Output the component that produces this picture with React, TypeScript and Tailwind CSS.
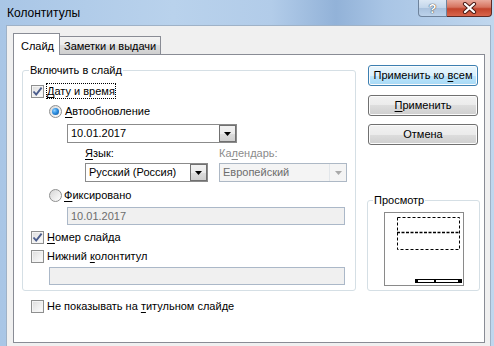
import React from "react";

const Check = () => (
  <svg width="11" height="11" viewBox="0 0 11 11" className="block">
    <path d="M1.5 5.5 L4.2 8.6 L9.6 1.6" fill="none" stroke="#4b5d8d" strokeWidth="1.9" />
  </svg>
);

const Checkbox = ({ checked }: { checked?: boolean }) => (
  <div className="flex h-[13px] w-[13px] shrink-0 items-center justify-center border border-[#8e8f8f] bg-[linear-gradient(135deg,#dcdcdc,#ffffff)] shadow-[inset_0_0_0_1px_#f4f4f4]">
    {checked && <Check />}
  </div>
);

const Radio = ({ checked }: { checked?: boolean }) => (
  <div className="flex h-[13px] w-[13px] shrink-0 items-center justify-center rounded-full border border-[#8e8f8f] bg-[linear-gradient(135deg,#d6d6d6,#ffffff)]">
    {checked && (
      <div className="h-[7px] w-[7px] rounded-full bg-[radial-gradient(circle_at_35%_35%,#8fd0ff_0%,#2c8ee0_45%,#0d4f94_100%)]" />
    )}
  </div>
);

const Arrow = ({ color }: { color: string }) => (
  <svg width="7" height="4" viewBox="0 0 7 4" className="block">
    <polygon points="0,0 7,0 3.5,4" fill={color} />
  </svg>
);

const Combo = ({
  value,
  className,
  disabled,
}: {
  value: string;
  className: string;
  disabled?: boolean;
}) => (
  <div
    className={`flex h-[19px] items-center border ${className} ${
      disabled
        ? "border-[#adb8c5] bg-[#f4f4f4] text-[#6d6d6d]"
        : "border-[#8b8b8b] bg-white"
    }`}
  >
    <div className="flex-1 whitespace-nowrap pl-[3px] leading-[17px]">{value}</div>
    {disabled ? (
      <div className="flex h-[17px] w-[17px] items-center justify-center border-l border-[#e2e6ea]">
        <Arrow color="#a9a9a9" />
      </div>
    ) : (
      <div className="flex h-[17px] w-[17px] items-center justify-center border border-[#707070] bg-[linear-gradient(#f2f2f2_0%,#ebebeb_50%,#dddddd_50%,#cfcfcf_100%)]">
        <Arrow color="#000" />
      </div>
    )}
  </div>
);

const DisabledInput = ({ value, className }: { value?: string; className: string }) => (
  <div
    className={`flex h-[18px] items-center border border-[#abb8c8] bg-[#f0f0f0] pl-[3px] text-[#6d6d6d] ${className}`}
  >
    {value}
  </div>
);

const CheckRow = ({
  checked,
  focused,
  children,
  className,
}: {
  checked?: boolean;
  focused?: boolean;
  children: React.ReactNode;
  className: string;
}) => (
  <div className={`flex h-[16px] items-center gap-[2px] ${className}`}>
    <Checkbox checked={checked} />
    <span
      className={`whitespace-nowrap border leading-[14px] ${
        focused ? "border-dotted border-black" : "border-transparent"
      }`}
    >
      {children}
    </span>
  </div>
);

const Key = ({ children }: { children: React.ReactNode }) => (
  <span className="underline underline-offset-[2px]">{children}</span>
);

const Button = ({
  children,
  primary,
  className,
}: {
  children: React.ReactNode;
  primary?: boolean;
  className: string;
}) => (
  <div
    className={`flex h-[21px] w-[110px] items-center justify-center rounded-[3px] border ${className} ${
      primary
        ? "border-[#3c7fb1] bg-[linear-gradient(#eaf6fd_0%,#d9f0fc_50%,#bee6fd_50%,#a7d9f5_100%)]"
        : "border-[#707070] bg-[linear-gradient(#f2f2f2_0%,#ebebeb_50%,#dddddd_50%,#cfcfcf_100%)]"
    } shadow-[inset_0_0_0_1px_#fbfbfb]`}
  >
    <span className="whitespace-nowrap">{children}</span>
  </div>
);

const PreviewPage = () => (
  <svg width="80" height="74" viewBox="0 0 80 74" className="block">
    <rect x="0.5" y="0.5" width="79" height="73" fill="#fff" stroke="#8a8a8a" />
    <rect x="13.5" y="5.5" width="62" height="32" fill="none" stroke="#000" strokeDasharray="3 2" />
    <line x1="13" y1="20.5" x2="76" y2="20.5" stroke="#000" strokeWidth="1.4" strokeDasharray="3 1.5" />
    <rect x="31" y="67" width="47" height="4" fill="#000" />
    <rect x="34" y="68" width="16" height="2" fill="#fff" />
    <rect x="52" y="68" width="22" height="2" fill="#fff" />
  </svg>
);

export default function App() {
  return (
    <div className="flex h-[346px] w-[494px] flex-col overflow-hidden bg-[linear-gradient(90deg,#a9c6e6_0%,#b9d2ec_35%,#b2cce9_55%,#92b2d8_68%,#a9c5e5_78%,#c0d7ee_100%)] text-[11px] text-black [font-family:'Liberation_Sans',Arial,sans-serif]">
      {/* title bar */}
      <div className="flex h-[25px] shrink-0">
        <div className="flex-1 pl-[7px] pt-[6px] text-[12px] leading-[14px]">Колонтитулы</div>
        <div className="mr-[2px] flex h-[17px]">
          <div className="flex w-[29px] items-center justify-center rounded-bl-[4px] border border-t-0 border-[#6e839c] bg-[linear-gradient(#dbe7f4_0%,#c2d5ea_50%,#a9c1dd_50%,#bcd2ea_100%)] text-[13px] font-bold leading-none text-white [text-shadow:0_0_1px_#333,0_0_1px_#333]">
            ?
          </div>
          <div className="flex w-[45px] items-center justify-center rounded-br-[4px] border border-l-0 border-t-0 border-[#5f2a25] bg-[linear-gradient(#e9a99c_0%,#d6735f_45%,#c2442c_55%,#d8654c_100%)]">
            <svg width="15" height="12" viewBox="0 0 15 12" className="block">
              <path d="M3 2 L12 10 M12 2 L3 10" stroke="#4a1a14" strokeWidth="4.2" strokeLinecap="round" />
              <path d="M3 2 L12 10 M12 2 L3 10" stroke="#fff" strokeWidth="2.3" strokeLinecap="round" />
            </svg>
          </div>
        </div>
      </div>

      {/* client area */}
      <div className="ml-[6px] mr-[3px] flex-1 border-l border-r border-t border-[#9fb2c7] bg-[#f0f0f0]">
        <div className="flex items-end pl-[6px] pt-[7px]">
          <div className="relative z-10 -mb-px flex h-[22px] w-[47px] border border-b-0 border-[#898c95] bg-white pl-[7px] pt-[5px] leading-[14px]">
            Слайд
          </div>
          <div className="flex h-[18px] w-[101px] items-center whitespace-nowrap border border-b-0 border-l-0 border-[#898c95] bg-[linear-gradient(#f3f3f3_0%,#ebebeb_50%,#dddddd_50%,#cfcfcf_100%)] pl-[4px] leading-[14px]">
            Заметки и выдачи
          </div>
        </div>

        <div className="ml-[6px] flex h-[289px] w-[472px] border border-[#898c95] bg-white">
          {/* left column */}
          <div className="flex flex-col pl-[8px]">
            <fieldset className="mt-[8px] flex w-[332px] flex-col rounded-[3px] border border-[#d5dfe5] pb-[5px] pl-[8px] pr-[8px]">
              <legend className="-ml-[2px] px-[1px] leading-[14px]">Включить в слайд</legend>

              <CheckRow checked focused className="mt-[6px]">
                <Key>Д</Key>ату и время
              </CheckRow>

              <div className="ml-[18px] mt-[4px] flex h-[16px] items-center gap-[3px]">
                <Radio checked />
                <span className="leading-[14px]">
                  <Key>А</Key>втообновление
                </span>
              </div>

              <Combo value="10.01.2017" className="ml-[36px] mt-[5px] w-[170px]" />

              <div className="ml-[54px] mt-[3px] flex h-[14px] leading-[14px]">
                <div className="w-[134px]">
                  <Key>Я</Key>зык:
                </div>
                <div className="text-[#8b8b8b]">
                  Ка<Key>л</Key>ендарь:
                </div>
              </div>

              <div className="ml-[54px] mt-[3px] flex gap-[11px]">
                <Combo value="Русский (Россия)" className="w-[123px]" />
                <Combo value="Европейский" className="w-[128px]" disabled />
              </div>

              <div className="ml-[18px] mt-[5px] flex h-[16px] items-center gap-[2px]">
                <Radio />
                <span className="leading-[14px]">
                  <Key>Ф</Key>иксировано
                </span>
              </div>

              <DisabledInput value="10.01.2017" className="ml-[36px] mt-[4px] w-[278px]" />

              <CheckRow checked className="mt-[4px]">
                <Key>Н</Key>омер слайда
              </CheckRow>

              <CheckRow className="mt-[3px]">
                Нижний <Key>к</Key>олонтитул
              </CheckRow>

              <DisabledInput className="ml-[18px] mt-[3px] w-[296px]" />
            </fieldset>

            <CheckRow className="ml-[9px] mt-[7px]">
              Не показывать на <Key>т</Key>итульном слайде
            </CheckRow>
          </div>

          {/* right column */}
          <div className="ml-[11px] flex w-[113px] flex-col">
            <Button primary className="ml-[1px] mt-[10px]">
              Применить ко <Key>в</Key>сем
            </Button>
            <Button className="ml-[1px] mt-[9px]">
              <Key>П</Key>рименить
            </Button>
            <Button className="ml-[1px] mt-[8px]">Отмена</Button>

            <fieldset className="mt-[48px] flex flex-col items-center rounded-[3px] border border-[#d5dfe5] pb-[4px]">
              <legend className="ml-[5px] px-[1px] leading-[14px]">Просмотр</legend>
              <div className="mt-[5px]">
                <PreviewPage />
              </div>
            </fieldset>
          </div>
        </div>
      </div>
    </div>
  );
}
